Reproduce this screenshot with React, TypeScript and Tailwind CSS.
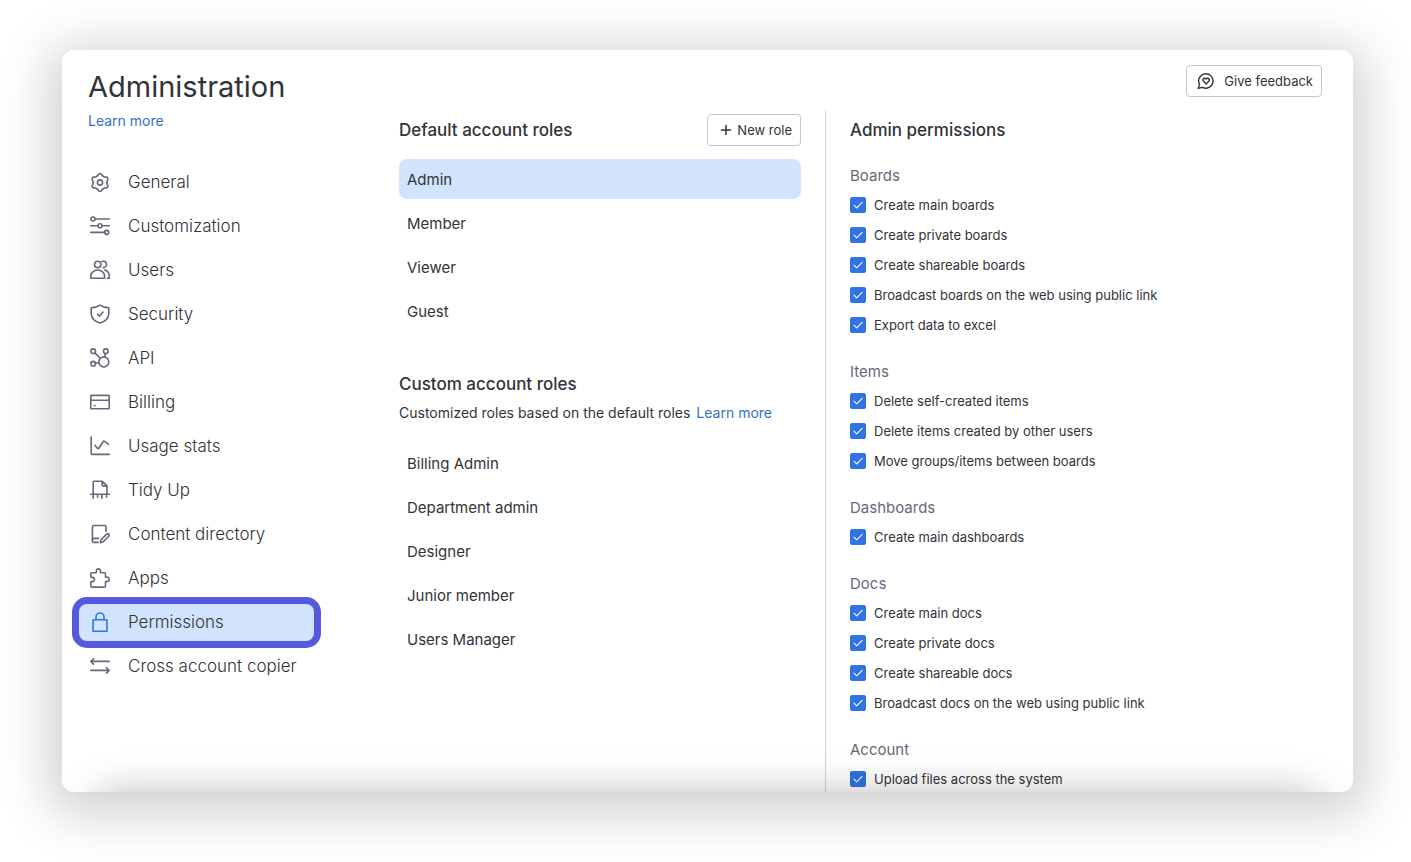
import React, { useState } from 'react';

interface NavItem {
  label: string;
  icon: React.ReactNode;
}

interface PermissionGroup {
  title: string;
  permissions: string[];
}

const navItems: NavItem[] = [
  {
    label: 'General',
    icon: (
      <>
        {[0, 60, 120, 180, 240, 300].map(angle => (
          <path
            key={angle}
            transform={`rotate(${angle} 10 10.5)`}
            d="M6.5 4.44C7.3 4 7.9 3.9 8.3 2.7C8.8 1.2 11.2 1.2 11.7 2.7C12.1 3.9 12.7 4 13.5 4.44"
          />
        ))}
        <circle cx="10" cy="10.5" r="2.6" />
      </>
    ),
  },
  {
    label: 'Customization',
    icon: (
      <>
        <circle cx="3" cy="3" r="2" />
        <path d="M5 3h14.3" />
        <circle cx="10" cy="9.8" r="2" />
        <path d="M.7 9.8H8M12 9.8h7.3" />
        <circle cx="16.7" cy="16.4" r="2" />
        <path d="M.7 16.4h14" />
      </>
    ),
  },
  {
    label: 'Users',
    icon: (
      <>
        <circle cx="7.7" cy="4.5" r="3.2" />
        <path d="M.8 18.3v-2.1a6.9 6.2 0 0 1 13.8 0v2.1z" />
        <path d="M12 1.5a3.2 3.2 0 1 1 1.2 6.1M14.8 9.9c2.6.8 4.5 3.1 4.5 6.3v2.1h-2" />
      </>
    ),
  },
  {
    label: 'Security',
    icon: (
      <>
        <path d="M10 1.2c2.5 1.8 5.3 2.6 8.8 2.7v5.3c0 4.8-3.6 8.2-8.8 9.9C4.8 17.4 1.2 14 1.2 9.2V3.9C4.7 3.8 7.5 3 10 1.2z" />
        <path d="M7.5 10.2l2 2L13 8" />
      </>
    ),
  },
  {
    label: 'API',
    icon: (
      <>
        <circle cx="3.2" cy="3.2" r="2.3" />
        <circle cx="15.8" cy="3.2" r="2.3" />
        <circle cx="3.2" cy="15.7" r="2.3" />
        <circle cx="13.8" cy="13.9" r="5" />
        <path d="M4.9 4.9l5.2 5.4M15.3 5.5l-.7 3.4M5.5 15.3l3.4-.6" />
      </>
    ),
  },
  {
    label: 'Billing',
    icon: (
      <>
        <rect x=".8" y="3.4" width="18.4" height="13.3" rx=".6" />
        <path d="M.8 8.2h18.4M4.3 13.6h.7" />
      </>
    ),
  },
  {
    label: 'Usage stats',
    icon: (
      <>
        <path d="M1.2 1v16.4a1 1 0 0 0 1 1h17" />
        <path d="M4.9 9.3l2.5 3c.5.6 1 .6 1.4 0l4.3-6.6c.5-.8 1-.8 1.6-.3l3.8 2.9" />
      </>
    ),
  },
  {
    label: 'Tidy Up',
    icon: (
      <>
        <path d="M3.2 14V2.2a1 1 0 0 1 1-1h8.1l4.7 4.7V14M12.2 1.4v3.7a1 1 0 0 0 1 1h3.6" />
        <path d="M.7 14.2h18.6M3.2 14.2v4M7.6 14.2v3M11.9 14.2v4M16.5 14.2v3" />
      </>
    ),
  },
  {
    label: 'Content directory',
    icon: (
      <>
        <path d="M16 7.5V2.7a1.2 1.2 0 0 0-1.2-1.2H4a1.6 1.6 0 0 0-1.6 1.6v13.6a1.7 1.7 0 0 0 1.7 1.7H8" />
        <path d="M2.4 16.2c0-1.2.7-1.8 1.9-1.8h4.2" />
        <path d="M10.3 18.7l.8-3.1 5.5-5.5c.7-.7 1.5-.6 2.1 0s.6 1.4 0 2.1l-5.5 5.6z" />
      </>
    ),
  },
  {
    label: 'Apps',
    icon: (
      <path d="M5.7 4.7c.7 0 .8-.5.7-1.2C6.2 1.9 7 .9 8.4.9s2.2 1 2 2.6c-.1.7.1 1.2.8 1.2h3.3c.6 0 1 .4 1 1v2.7c0 .7.5.9 1.1.8 1.6-.2 2.6.8 2.6 2.2s-1 2.2-2.6 2c-.6-.1-1.1.1-1.1.8v3.9c0 .6-.4 1-1 1H1.8c-.6 0-1-.4-1-1v-3.7c0-.7.5-.9 1.1-.8 1.6.2 2.6-.7 2.6-2.1s-1-2.3-2.6-2.1c-.6.1-1.1-.1-1.1-.8V5.7c0-.6.4-1 1-1z" />
    ),
  },
  {
    label: 'Permissions',
    icon: (
      <>
        <rect x="3" y="7.8" width="14" height="11.4" rx=".4" />
        <path d="M6 7.8V5a4 4 0 0 1 8 0v2.8" />
      </>
    ),
  },
  {
    label: 'Cross account copier',
    icon: (
      <path d="M19.2 5.4H1M3.5 2.7L.9 5.4l2.6 2.7M.8 14.4H19M16.5 11.7l2.6 2.7-2.6 2.7" />
    ),
  },
];

const defaultRoles = ['Admin', 'Member', 'Viewer', 'Guest'];

const customRoles = ['Billing Admin', 'Department admin', 'Designer', 'Junior member', 'Users Manager'];

const permissionGroups: PermissionGroup[] = [
  {
    title: 'Boards',
    permissions: [
      'Create main boards',
      'Create private boards',
      'Create shareable boards',
      'Broadcast boards on the web using public link',
      'Export data to excel',
    ],
  },
  {
    title: 'Items',
    permissions: ['Delete self-created items', 'Delete items created by other users', 'Move groups/items between boards'],
  },
  {
    title: 'Dashboards',
    permissions: ['Create main dashboards'],
  },
  {
    title: 'Docs',
    permissions: [
      'Create main docs',
      'Create private docs',
      'Create shareable docs',
      'Broadcast docs on the web using public link',
    ],
  },
  {
    title: 'Account',
    permissions: ['Upload files across the system'],
  },
];

const Sidebar: React.FC = () => {
  const [active, setActive] = useState('Permissions');

  return (
    <aside className="w-[337px] shrink-0 pl-[17px] pt-[19px]">
      <h1 className="pl-[9px] text-[29px] leading-9">Administration</h1>
      <a href="#learn-more" className="ml-[9px] mt-1.5 block w-fit text-sm leading-5 text-[#3273c6]">
        Learn more
      </a>
      <nav className="mt-[33px] flex w-[235px] flex-col gap-[7px]">
        {navItems.map(item => (
          <button
            key={item.label}
            onClick={() => setActive(item.label)}
            className={`flex h-[37px] items-center gap-[18px] rounded-lg pb-px pl-[11px] text-left text-[17px] font-light leading-6 ${
              active === item.label ? 'bg-[#d2e4fd] ring-[7px] ring-[#5559df]' : ''
            }`}
          >
            <svg
              viewBox="0 0 20 20"
              className={`size-5 shrink-0 ${active === item.label ? 'text-[#2f76e5]' : 'text-[#676879]'}`}
              fill="none"
              stroke="currentColor"
              strokeWidth="1.6"
              strokeLinecap="round"
              strokeLinejoin="round"
            >
              {item.icon}
            </svg>
            <span className="whitespace-nowrap">{item.label}</span>
          </button>
        ))}
      </nav>
    </aside>
  );
};

interface RoleListProps {
  roles: string[];
  selected: string;
  onSelect: (role: string) => void;
}

const RoleList: React.FC<RoleListProps> = ({ roles, selected, onSelect }) => (
  <div className="flex flex-col gap-1">
    {roles.map(role => (
      <button
        key={role}
        onClick={() => onSelect(role)}
        className={`h-10 rounded-lg px-2 pt-0.5 text-left text-[15px] leading-6 ${selected === role ? 'bg-[#d2e4fd]' : ''}`}
      >
        {role}
      </button>
    ))}
  </div>
);

const PermissionCheckbox: React.FC<{ label: string }> = ({ label }) => (
  <label className="flex h-[30px] items-center gap-2 text-[13px] leading-5">
    <span className="grid size-4 shrink-0">
      <input
        type="checkbox"
        defaultChecked
        className="peer col-start-1 row-start-1 size-4 appearance-none rounded-xs border border-[#c3c6d4] checked:border-[#2f73e5] checked:bg-[#2f73e5]"
      />
      <svg
        viewBox="0 0 16 16"
        className="pointer-events-none invisible col-start-1 row-start-1 size-4 peer-checked:visible"
        fill="none"
        stroke="white"
        strokeWidth="1.1"
        strokeLinecap="round"
        strokeLinejoin="round"
      >
        <path d="M4 8.2l2.7 2.7L12.2 5.4" />
      </svg>
    </span>
    {label}
  </label>
);

const App: React.FC = () => {
  const [selectedRole, setSelectedRole] = useState('Admin');

  return (
    <div className="h-screen bg-white pb-[70px] pl-[62px] pr-[58px] pt-[50px] font-['Inter',sans-serif] text-[#323338]">
      <div className="relative flex h-full overflow-hidden rounded-xl bg-white shadow-[0_10px_50px_14px_rgba(0,0,0,0.18)]">
        <Sidebar />

        <main className="flex min-w-0 flex-1 flex-col">
          <header className="flex h-[61px] shrink-0 justify-end pr-[31px] pt-[15px]">
            <button className="flex h-8 items-center gap-[9px] rounded-sm border border-[#c3c6d4] pl-2.5 pr-2 text-[13px] leading-5">
              <svg
                viewBox="0 0 18 18"
                className="size-[18px]"
                fill="none"
                stroke="currentColor"
                strokeWidth="1.4"
                strokeLinecap="round"
                strokeLinejoin="round"
              >
                <path d="M2.5 12.4A7.2 7.2 0 1 1 5.4 15.3L1.2 16.4z" />
                <path d="M9.1 12L6.4 9.2C4.8 7.2 7.6 5 9.1 7c1.5-2 4.3.2 2.7 2.2z" />
              </svg>
              Give feedback
            </button>
          </header>

          <div className="flex flex-1">
            <section className="w-[426px] shrink-0 pr-6 pt-[3px]">
              <div className="mb-[13px] flex items-center justify-between">
                <h2 className="text-[17px] font-medium leading-6">Default account roles</h2>
                <button className="flex h-8 items-center gap-[5px] rounded-sm border border-[#c3c6d4] pl-3 pr-2 text-[13px] leading-5">
                  <svg viewBox="0 0 12 12" className="size-3" fill="none" stroke="currentColor" strokeWidth="1.5" strokeLinecap="round">
                    <path d="M6 1.5v9M1.5 6h9" />
                  </svg>
                  New role
                </button>
              </div>
              <RoleList roles={defaultRoles} selected={selectedRole} onSelect={setSelectedRole} />

              <h2 className="mt-[41px] text-[17px] font-medium leading-6">Custom account roles</h2>
              <p className="mb-5 mt-[7px] whitespace-nowrap text-sm leading-5">
                Customized roles based on the default roles{' '}
                <a href="#learn-more" className="ml-0.5 text-[#3273c6]">
                  Learn more
                </a>
              </p>
              <RoleList roles={customRoles} selected={selectedRole} onSelect={setSelectedRole} />
            </section>

            <section className="min-w-0 flex-1 border-l border-[#d0d1dc] pl-6 pt-[7px]">
              <h2 className="mb-[23px] text-[17px] font-medium leading-6">Admin permissions</h2>
              {permissionGroups.map(group => (
                <fieldset key={group.title} className="mb-[21px]">
                  <legend className="mb-[3px] text-[15px] leading-[22px] text-[#676879]">{group.title}</legend>
                  {group.permissions.map(permission => (
                    <PermissionCheckbox key={permission} label={permission} />
                  ))}
                </fieldset>
              ))}
            </section>
          </div>
        </main>

        {/* soft shade along the bottom edge, thinner near the corners */}
        <div className="pointer-events-none absolute left-9 right-9 top-full h-12 shadow-[0_0_40px_rgba(0,0,0,0.26)]" />
      </div>
    </div>
  );
};

export default App;
